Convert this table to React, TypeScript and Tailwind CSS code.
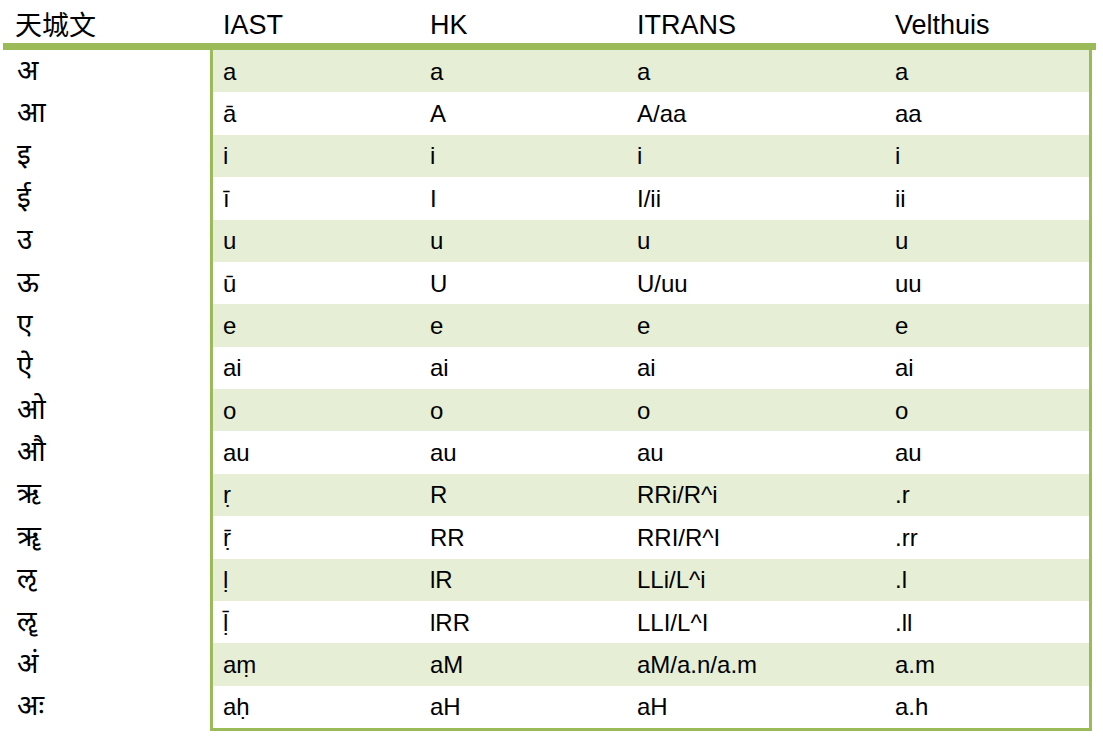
import React from "react";

const rows: [string, string, string, string, string][] = [
  ["अ", "a", "a", "a", "a"],
  ["आ", "ā", "A", "A/aa", "aa"],
  ["इ", "i", "i", "i", "i"],
  ["ई", "ī", "I", "I/ii", "ii"],
  ["उ", "u", "u", "u", "u"],
  ["ऊ", "ū", "U", "U/uu", "uu"],
  ["ए", "e", "e", "e", "e"],
  ["ऐ", "ai", "ai", "ai", "ai"],
  ["ओ", "o", "o", "o", "o"],
  ["औ", "au", "au", "au", "au"],
  ["ऋ", "ṛ", "R", "RRi/R^i", ".r"],
  ["ॠ", "ṝ", "RR", "RRI/R^I", ".rr"],
  ["ऌ", "ḷ", "lR", "LLi/L^i", ".l"],
  ["ॡ", "ḹ", "lRR", "LLI/L^I", ".ll"],
  ["अं", "aṃ", "aM", "aM/a.n/a.m", "a.m"],
  ["अः", "aḥ", "aH", "aH", "a.h"],
];

const latin = { fontFamily: '"Liberation Sans", Arial, sans-serif' };
const deva = { fontFamily: '"Noto Sans Devanagari", "Lohit Devanagari", Mangal, "Noto Sans", sans-serif' };

export default function App() {
  return (
    <div className="w-[1103px] h-[738px] bg-white text-black overflow-hidden px-[3px]" style={latin}>
      {/* header */}
      <div className="flex h-[43px] items-start pt-[10px] text-[27px] leading-[31px]">
        <div className="w-[207px] pl-[12px] -mt-[2px]" style={{ fontFamily: '"Noto Sans CJK SC", sans-serif' }}>天城文</div>
        <div className="w-[208px] pl-[13px]">IAST</div>
        <div className="w-[207px] pl-[12px]">HK</div>
        <div className="w-[258px] pl-[12px]">ITRANS</div>
        <div className="flex-1 pl-[12px]">Velthuis</div>
      </div>
      <div className="h-[7px] w-[1093px] bg-[#9bbb59]" />
      {/* body */}
      <div className="flex">
        <div className="w-[207px]">
          {rows.map((r, i) => (
            <div key={i} className="h-[42.375px] flex items-center pl-[14px] pt-[4px] text-[28px] leading-[33px]" style={deva}>
              {r[0]}
            </div>
          ))}
        </div>
        <div className="w-[882px] border-x-[3px] border-b-[3px] border-[#9bbb59]">
          {rows.map((r, i) => (
            <div
              key={i}
              className={`h-[42.375px] flex items-center pt-[1px] text-[24px] ${i % 2 === 0 ? "bg-[#e6eed5]" : "bg-white"}`}
            >
              <div className="w-[205px] pl-[10px]">{r[1]}</div>
              <div className="w-[207px] pl-[12px]">{r[2]}</div>
              <div className="w-[258px] pl-[12px]">{r[3]}</div>
              <div className="flex-1 pl-[12px]">{r[4]}</div>
            </div>
          ))}
        </div>
      </div>
    </div>
  );
}
